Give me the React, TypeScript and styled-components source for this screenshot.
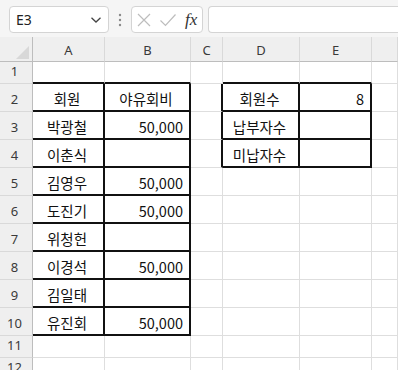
import styled, { createGlobalStyle } from "styled-components";

const GlobalStyle = createGlobalStyle`
  html, body {
    margin: 0;
    padding: 0;
    background: #ffffff;
    overflow: hidden;
  }
  * {
    box-sizing: border-box;
  }
`;

const COLS = "33px 72px 86px 32px 77px 72px 1fr";

type Col = "A" | "B" | "C" | "D" | "E" | "F";
type RowData = { n: number; h: number; cells: Partial<Record<Col, string>> };

const rows: RowData[] = [
  { n: 1, h: 22, cells: {} },
  { n: 2, h: 28, cells: { A: "회원", B: "야유회비", D: "회원수", E: "8" } },
  { n: 3, h: 28, cells: { A: "박광철", B: "50,000", D: "납부자수" } },
  { n: 4, h: 28, cells: { A: "이춘식", D: "미납자수" } },
  { n: 5, h: 28, cells: { A: "김영우", B: "50,000" } },
  { n: 6, h: 28, cells: { A: "도진기", B: "50,000" } },
  { n: 7, h: 28, cells: { A: "위청헌" } },
  { n: 8, h: 28, cells: { A: "이경석", B: "50,000" } },
  { n: 9, h: 28, cells: { A: "김일태" } },
  { n: 10, h: 28, cells: { A: "유진회", B: "50,000" } },
  { n: 11, h: 22, cells: {} },
  { n: 12, h: 22, cells: {} },
];

const letters: Col[] = ["A", "B", "C", "D", "E", "F"];

// which sides get the black table border
const blackRight = (r: number, c: Col) =>
  (r >= 2 && r <= 10 && (c === "A" || c === "B")) ||
  (r >= 2 && r <= 4 && (c === "C" || c === "D" || c === "E"));

const blackBottom = (r: number, c: Col) =>
  (r >= 1 && r <= 10 && (c === "A" || c === "B")) ||
  (r >= 1 && r <= 4 && (c === "D" || c === "E"));

const alignOf = (c: Col, v: string) => (/^[\d,]+$/.test(v) ? "right" : "center");

const Page = styled.div`
  width: 398px;
  height: 370px;
  background: #ffffff;
  font-family: "Noto Sans CJK KR", "Noto Sans", sans-serif;
  overflow: hidden;
`;

const Toolbar = styled.div`
  height: 37px;
  background: #f5f5f5;
  display: flex;
  align-items: flex-start;
  padding: 6px 0 0 9px;
  gap: 0;
`;

const NameBox = styled.div`
  width: 100px;
  height: 27px;
  background: #ffffff;
  border: 1px solid #d4d4d4;
  border-radius: 4px;
  display: flex;
  align-items: center;
  justify-content: space-between;
  padding: 0 6px 0 6px;
  font-family: "Noto Sans", "Liberation Sans", sans-serif;
  font-size: 14px;
  color: #222;
`;

const Dots = styled.div`
  width: 22px;
  height: 27px;
  display: flex;
  align-items: center;
  justify-content: center;
`;

const FxGroup = styled.div`
  width: 72px;
  height: 27px;
  background: #ffffff;
  border: 1px solid #d4d4d4;
  border-radius: 4px;
  display: flex;
  align-items: center;
  padding: 0 0 0 4px;
  gap: 7px;
`;

const FxText = styled.span`
  font-family: "Liberation Serif", "DejaVu Serif", serif;
  font-style: italic;
  font-size: 17px;
  color: #333;
  margin-left: 1px;
  line-height: 1;
`;

const FormulaInput = styled.div`
  flex: 1;
  height: 27px;
  margin-left: 5px;
  background: #ffffff;
  border: 1px solid #d4d4d4;
  border-right: none;
  border-radius: 4px 0 0 4px;
`;

const GridRow = styled.div<{ $h: number }>`
  display: grid;
  grid-template-columns: ${COLS};
  height: ${(p) => p.$h}px;
`;

const Corner = styled.div`
  background: #efefef;
  border-right: 1px solid #bdbdbd;
  border-bottom: 1px solid #bdbdbd;
  position: relative;
`;

const ColHead = styled.div`
  background: #efefef;
  border-right: 1px solid #d9d9d9;
  border-bottom: 1px solid #bdbdbd;
  display: flex;
  align-items: center;
  justify-content: center;
  font-family: "Noto Sans", "Liberation Sans", sans-serif;
  font-size: 13px;
  color: #3a3a3a;
  padding-top: 1px;
`;

const RowHead = styled.div`
  background: #efefef;
  border-right: 1px solid #bdbdbd;
  border-bottom: 1px solid #d9d9d9;
  display: flex;
  align-items: flex-end;
  justify-content: center;
  padding-bottom: 3px;
  font-family: "Noto Sans", "Liberation Sans", sans-serif;
  font-size: 13px;
  color: #3a3a3a;
  padding-right: 3px;
`;

const Cell = styled.div<{ $right: boolean; $bottom: boolean; $align: string }>`
  border-right: ${(p) => (p.$right ? "2px solid #111" : "1px solid #dedede")};
  border-bottom: ${(p) => (p.$bottom ? "2px solid #111" : "1px solid #dedede")};
  display: flex;
  align-items: center;
  justify-content: ${(p) => (p.$align === "right" ? "flex-end" : "center")};
  padding: 2px 6px 0 4px;
  font-size: 14.5px;
  color: #111;
  white-space: nowrap;
`;

const Chevron = () => (
  <svg width="12" height="8" viewBox="0 0 12 8">
    <path d="M1.5 1.8 L6 6 L10.5 1.8" fill="none" stroke="#444" strokeWidth="1.3" />
  </svg>
);

const VDots = () => (
  <svg width="4" height="14" viewBox="0 0 4 14">
    <circle cx="2" cy="2" r="1.2" fill="#8a8a8a" />
    <circle cx="2" cy="7" r="1.2" fill="#8a8a8a" />
    <circle cx="2" cy="12" r="1.2" fill="#8a8a8a" />
  </svg>
);

const Cross = () => (
  <svg width="16" height="16" viewBox="0 0 16 16">
    <path d="M2 2 L14 14 M14 2 L2 14" stroke="#bdbdbd" strokeWidth="1.2" fill="none" />
  </svg>
);

const Check = () => (
  <svg width="18" height="16" viewBox="0 0 18 16">
    <path d="M1.5 8.5 L6.5 13.5 L16.5 2.5" stroke="#bdbdbd" strokeWidth="1.2" fill="none" />
  </svg>
);

const CornerMark = () => (
  <svg width="33" height="26" viewBox="0 0 33 26" style={{ position: "absolute", left: 0, top: 0 }}>
    <path d="M16 22 L29 22 L29 9 Z" fill="#d8d8d8" />
  </svg>
);

export default function App() {
  return (
    <Page>
      <GlobalStyle />
      <Toolbar>
        <NameBox>
          <span>E3</span>
          <Chevron />
        </NameBox>
        <Dots>
          <VDots />
        </Dots>
        <FxGroup>
          <Cross />
          <Check />
          <FxText>fx</FxText>
        </FxGroup>
        <FormulaInput />
      </Toolbar>

      <GridRow $h={25}>
        <Corner>
          <CornerMark />
        </Corner>
        {letters.map((l) => (
          <ColHead key={l}>{l === "F" ? "" : l}</ColHead>
        ))}
      </GridRow>

      {rows.map((row) => (
        <GridRow key={row.n} $h={row.h}>
          <RowHead>{row.n}</RowHead>
          {letters.map((c) => {
            const v = row.cells[c] ?? "";
            return (
              <Cell
                key={c}
                $right={blackRight(row.n, c)}
                $bottom={blackBottom(row.n, c)}
                $align={alignOf(c, v)}
              >
                {v}
              </Cell>
            );
          })}
        </GridRow>
      ))}
    </Page>
  );
}
